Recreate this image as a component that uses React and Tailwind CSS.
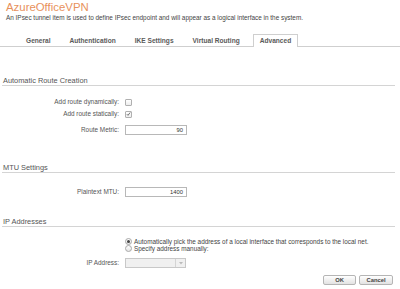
import React from "react";

const tabs = ["General", "Authentication", "IKE Settings", "Virtual Routing", "Advanced"];

function SectionHeader({ children, className = "" }) {
  return (
    <div className={`ml-[2px] mr-[5px] h-[10px] border-b border-[#d4d4d4] pl-[1px] text-[7.4px] leading-[9px] text-[#555] ${className}`}>
      {children}
    </div>
  );
}

function Row({ label, children, className = "" }) {
  return (
    <div className={`flex items-center ${className}`}>
      <div className="w-[119px] text-right text-[6.4px] leading-[8px] text-[#555]">{label}</div>
      <div className="ml-[6px] flex items-center">{children}</div>
    </div>
  );
}

function Checkbox({ checked }) {
  return (
    <div className="w-[7px] h-[7px] rounded-[1px] border border-[#b0b0b0] bg-gradient-to-b from-white to-[#ededed] flex items-center justify-center">
      {checked && (
        <svg width="6" height="6" viewBox="0 0 6 6">
          <path d="M1 3.2 L2.4 4.6 L5 1.2" fill="none" stroke="#444" strokeWidth="0.9" />
        </svg>
      )}
    </div>
  );
}

function Radio({ checked }) {
  return (
    <div className="w-[7px] h-[7px] rounded-full border border-[#a8a8a8] bg-gradient-to-b from-white to-[#e6e6e6] flex items-center justify-center">
      {checked && <div className="w-[3px] h-[3px] rounded-full bg-[#444]" />}
    </div>
  );
}

function NumInput({ value }) {
  return (
    <div className="w-[62px] h-[10px] border border-[#b8b8b8] bg-white text-right pr-[3px] text-[5.8px] leading-[8px] text-[#333]">
      {value}
    </div>
  );
}

export default function App() {
  return (
    <div
      className="w-[400px] h-[289px] overflow-hidden bg-white"
      style={{ fontFamily: '"Liberation Sans", Arial, sans-serif' }}
    >
      <div className="pl-[6px] pt-[1px]">
        <h1 className="text-[11.4px] leading-[13px] text-[#e8915c]">AzureOfficeVPN</h1>
        <p className="text-[6.4px] leading-[7px] text-[#444]">
          An IPsec tunnel item is used to define IPsec endpoint and will appear as a logical interface in the system.
        </p>
      </div>

      {/* tabs */}
      <div className="mt-[13px] flex h-[13px] border-b border-[#cfcfcf] pl-[20px] gap-[7px]">
        {tabs.map((t) =>
          t === "Advanced" ? (
            <div
              key={t}
              className="-mb-px h-[13px] border border-b-0 border-[#cfcfcf] bg-white px-[6px] text-[6.6px] font-bold leading-[12px] text-[#5a5a5a]"
            >
              {t}
            </div>
          ) : (
            <div key={t} className="px-[6px] text-[6.6px] font-bold leading-[13px] text-[#5a5a5a]">
              {t}
            </div>
          )
        )}
      </div>

      <SectionHeader className="mt-[29px]">Automatic Route Creation</SectionHeader>

      <Row label="Add route dynamically:" className="mt-[12px] h-[8px]">
        <Checkbox />
      </Row>
      <Row label="Add route statically:" className="mt-[4px] h-[8px]">
        <Checkbox checked />
      </Row>
      <Row label="Route Metric:" className="mt-[7px] h-[10px]">
        <NumInput value="90" />
      </Row>

      <SectionHeader className="mt-[28px]">MTU Settings</SectionHeader>

      <Row label="Plaintext MTU:" className="mt-[14px] h-[10px]">
        <NumInput value="1400" />
      </Row>

      <SectionHeader className="mt-[20px]">IP Addresses</SectionHeader>

      <div className="mt-[11px] ml-[125px] text-[6.4px] leading-[7px] text-[#444]">
        <div className="flex items-center gap-[2px] h-[7px]">
          <Radio checked />
          <span>Automatically pick the address of a local interface that corresponds to the local net.</span>
        </div>
        <div className="flex items-center gap-[2px] h-[7px]">
          <Radio />
          <span>Specify address manually:</span>
        </div>
      </div>

      <Row label="IP Address:" className="mt-[6px] h-[10px]">
        <div className="w-[61px] h-[10px] flex border border-[#c8c8c8] bg-[#f0f0f0]">
          <div className="flex-1" />
          <div className="w-[10px] border-l border-[#d4d4d4] flex items-center justify-center">
            <svg width="4" height="3" viewBox="0 0 4 3">
              <path d="M0 0 L4 0 L2 2.5 Z" fill="#bbb" />
            </svg>
          </div>
        </div>
      </Row>

      <div className="mt-[7px] flex justify-end gap-[3px] pr-[7px]">
        <button className="w-[33px] h-[10px] rounded-[2px] border border-[#b5b5b5] bg-gradient-to-b from-white to-[#e2e2e2] text-[5.8px] font-bold leading-[8px] text-[#444]">
          OK
        </button>
        <button className="w-[34px] h-[10px] rounded-[2px] border border-[#b5b5b5] bg-gradient-to-b from-white to-[#e2e2e2] text-[5.8px] font-bold leading-[8px] text-[#444]">
          Cancel
        </button>
      </div>
    </div>
  );
}
